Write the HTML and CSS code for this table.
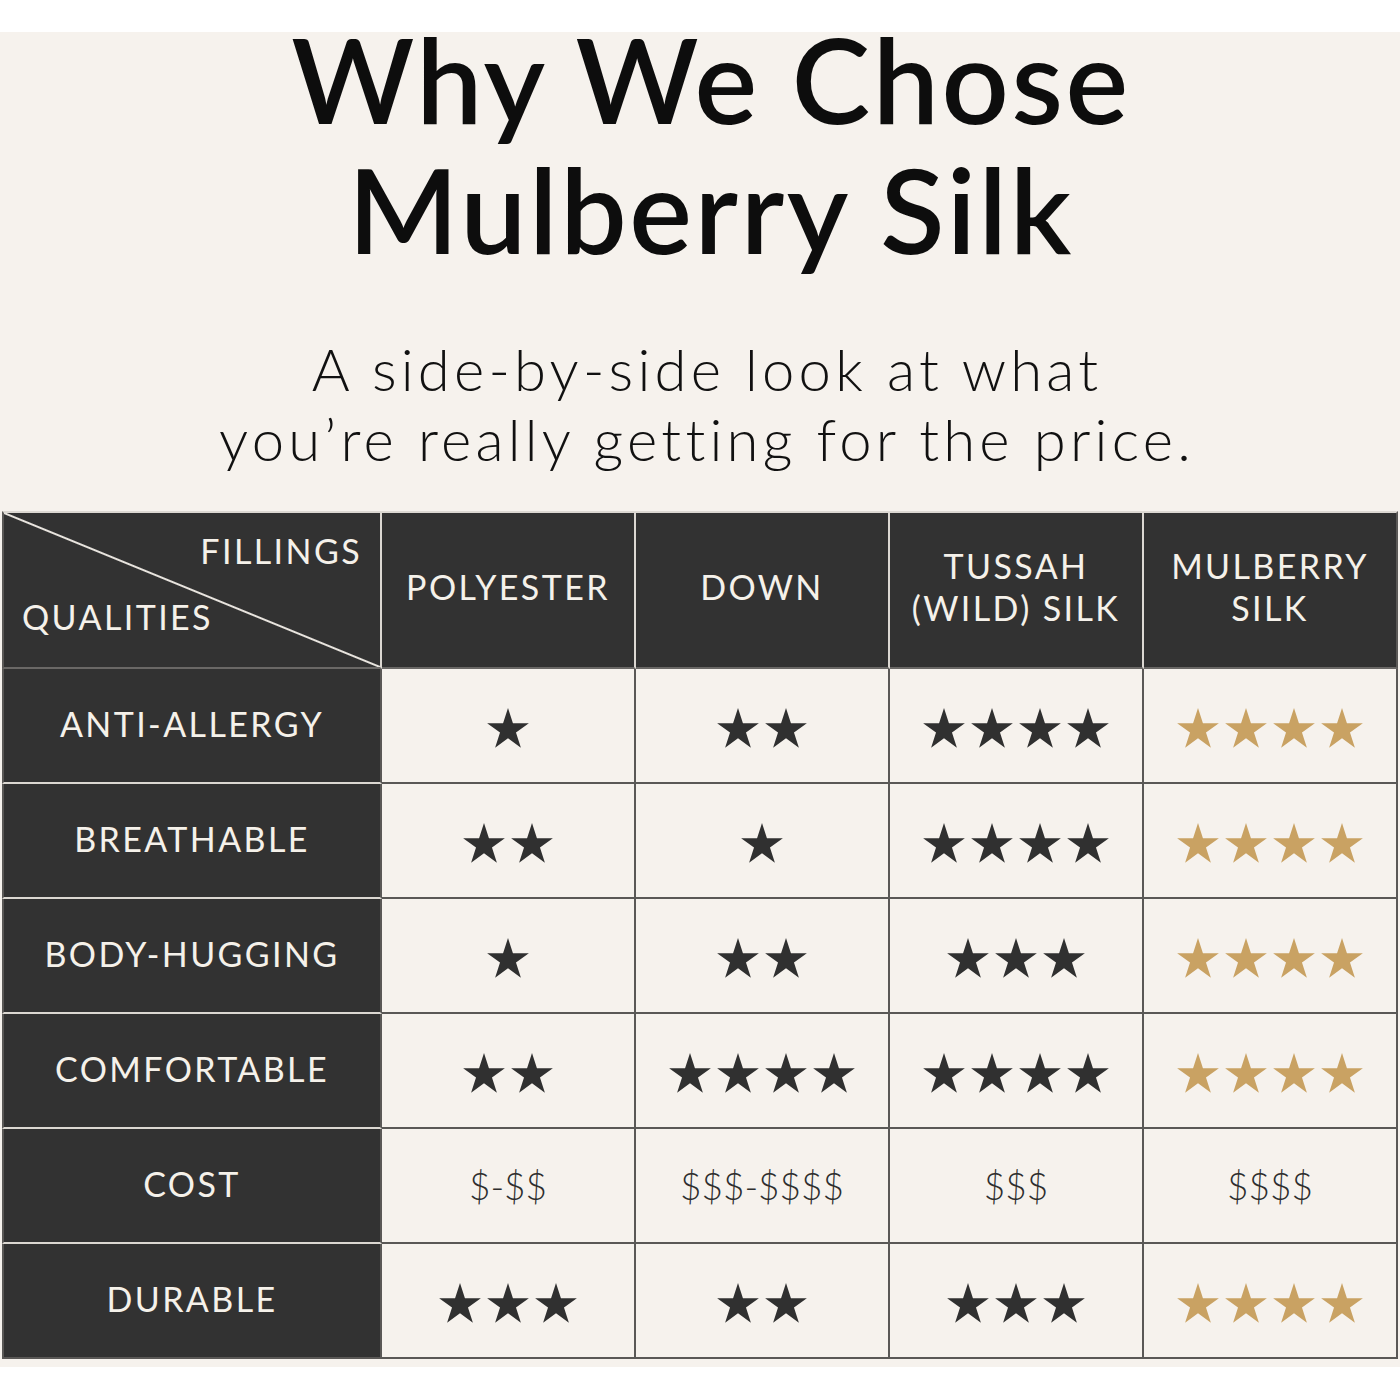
FILE: index.html
```html
<!DOCTYPE html>
<html lang="en">
<head>
<meta charset="utf-8">
<title>Why We Chose Mulberry Silk</title>
<link rel="stylesheet" href="styles.css">
</head>
<body>
<svg class="defs" width="0" height="0" aria-hidden="true">
  <defs>
    <symbol id="star" viewBox="0 0 46 43">
      <polygon points="23,0 28.17,15.88 44.87,15.89 31.37,25.72 36.52,41.61 23,31.8 9.48,41.61 14.63,25.72 1.13,15.89 17.83,15.88"/>
    </symbol>
  </defs>
</svg>
<div class="topband"></div>
<main class="page">
  <h1 class="title"><span class="title-line">Why We Chose</span><span class="title-line">Mulberry Silk</span></h1>
  <p class="subtitle"><span class="sub-line">A side-by-side look at what</span><span class="sub-line">you’re really getting for the price.</span></p>

  <div class="grid">
    <div class="cell head corner">
      <div class="corner-top">FILLINGS</div>
      <div class="corner-bottom">QUALITIES</div>
    </div>
    <div class="cell head">POLYESTER</div>
    <div class="cell head">DOWN</div>
    <div class="cell head">TUSSAH<br>(WILD) SILK</div>
    <div class="cell head last-col">MULBERRY<br>SILK</div>

    <div class="cell label">ANTI-ALLERGY</div>
    <div class="cell val"><span class="stars"><svg><use href="#star"/></svg></span></div>
    <div class="cell val"><span class="stars"><svg><use href="#star"/></svg><svg><use href="#star"/></svg></span></div>
    <div class="cell val"><span class="stars"><svg><use href="#star"/></svg><svg><use href="#star"/></svg><svg><use href="#star"/></svg><svg><use href="#star"/></svg></span></div>
    <div class="cell val last-col"><span class="stars gold"><svg><use href="#star"/></svg><svg><use href="#star"/></svg><svg><use href="#star"/></svg><svg><use href="#star"/></svg></span></div>

    <div class="cell label">BREATHABLE</div>
    <div class="cell val"><span class="stars"><svg><use href="#star"/></svg><svg><use href="#star"/></svg></span></div>
    <div class="cell val"><span class="stars"><svg><use href="#star"/></svg></span></div>
    <div class="cell val"><span class="stars"><svg><use href="#star"/></svg><svg><use href="#star"/></svg><svg><use href="#star"/></svg><svg><use href="#star"/></svg></span></div>
    <div class="cell val last-col"><span class="stars gold"><svg><use href="#star"/></svg><svg><use href="#star"/></svg><svg><use href="#star"/></svg><svg><use href="#star"/></svg></span></div>

    <div class="cell label">BODY-HUGGING</div>
    <div class="cell val"><span class="stars"><svg><use href="#star"/></svg></span></div>
    <div class="cell val"><span class="stars"><svg><use href="#star"/></svg><svg><use href="#star"/></svg></span></div>
    <div class="cell val"><span class="stars"><svg><use href="#star"/></svg><svg><use href="#star"/></svg><svg><use href="#star"/></svg></span></div>
    <div class="cell val last-col"><span class="stars gold"><svg><use href="#star"/></svg><svg><use href="#star"/></svg><svg><use href="#star"/></svg><svg><use href="#star"/></svg></span></div>

    <div class="cell label">COMFORTABLE</div>
    <div class="cell val"><span class="stars"><svg><use href="#star"/></svg><svg><use href="#star"/></svg></span></div>
    <div class="cell val"><span class="stars"><svg><use href="#star"/></svg><svg><use href="#star"/></svg><svg><use href="#star"/></svg><svg><use href="#star"/></svg></span></div>
    <div class="cell val"><span class="stars"><svg><use href="#star"/></svg><svg><use href="#star"/></svg><svg><use href="#star"/></svg><svg><use href="#star"/></svg></span></div>
    <div class="cell val last-col"><span class="stars gold"><svg><use href="#star"/></svg><svg><use href="#star"/></svg><svg><use href="#star"/></svg><svg><use href="#star"/></svg></span></div>

    <div class="cell label">COST</div>
    <div class="cell val cost">$-$$</div>
    <div class="cell val cost">$$$-$$$$</div>
    <div class="cell val cost">$$$</div>
    <div class="cell val cost last-col">$$$$</div>

    <div class="cell label last-row">DURABLE</div>
    <div class="cell val last-row"><span class="stars"><svg><use href="#star"/></svg><svg><use href="#star"/></svg><svg><use href="#star"/></svg></span></div>
    <div class="cell val last-row"><span class="stars"><svg><use href="#star"/></svg><svg><use href="#star"/></svg></span></div>
    <div class="cell val last-row"><span class="stars"><svg><use href="#star"/></svg><svg><use href="#star"/></svg><svg><use href="#star"/></svg></span></div>
    <div class="cell val last-row last-col"><span class="stars gold"><svg><use href="#star"/></svg><svg><use href="#star"/></svg><svg><use href="#star"/></svg><svg><use href="#star"/></svg></span></div>
  </div>
</main>
</body>
</html>
```

FILE: styles.css
```css
* { box-sizing: border-box; }

html, body {
  margin: 0;
  padding: 0;
  background: #ffffff;
}

body {
  font-family: "Lato", "Open Sans", sans-serif;
  color: #111;
}

.defs {
  display: block;
  width: 0;
  height: 0;
  overflow: hidden;
}

.topband {
  height: 32px;
  background: #ffffff;
}

.page {
  display: flex;
  flex-direction: column;
  background: #f6f2ed;
  padding-bottom: 8px;
}

.title {
  margin: -8px 0 0;
  padding-left: 22px;
  display: flex;
  flex-direction: column;
  align-items: center;
  gap: 20px;
  font-family: "Lato", sans-serif;
  font-weight: 600;
  font-size: 118px;
  line-height: 110px;
  color: #0d0d0d;
  letter-spacing: 2.6px;
}

.title-line {
  display: block;
}

.subtitle {
  margin: 70px 0 0;
  padding-left: 14px;
  display: flex;
  flex-direction: column;
  align-items: center;
  font-family: "Lato", sans-serif;
  font-weight: 300;
  font-size: 58px;
  line-height: 70px;
  color: #111;
  letter-spacing: 4.2px;
}

.sub-line {
  display: block;
}

.grid {
  margin: 37px 2px 0;
  display: grid;
  grid-template-columns: 380px repeat(4, 254px);
  grid-template-rows: 158px repeat(6, 115px);
}

.cell {
  display: flex;
  align-items: center;
  justify-content: center;
  text-align: center;
  border-right: 2px solid #5a5856;
  border-bottom: 2px solid #5a5856;
}

.head {
  background: #323232;
  color: #f5f1ea;
  font-size: 34px;
  letter-spacing: 2.4px;
  line-height: 42px;
  padding-bottom: 6px;
  border-right-color: #dcd8d2;
  border-bottom-color: #6a6866;
  border-top: 2px solid #dcd8d2;
}

.corner {
  display: block;
  text-align: left;
  padding: 18px 18px 0 18px;
  border-left: 2px solid #5a5856;
  line-height: 40px;
  background:
    linear-gradient(to top right, transparent calc(50% - 1.5px), #e8e4de calc(50% - 0.5px), #e8e4de calc(50% + 0.5px), transparent calc(50% + 1.5px)),
    #323232;
}

.corner-top {
  text-align: right;
}

.corner-bottom {
  margin-top: 26px;
}

.label {
  background: #323232;
  color: #f5f1ea;
  font-size: 34px;
  letter-spacing: 2.4px;
  padding-bottom: 4px;
  border-left: 2px solid #5a5856;
  border-right-color: #5a5856;
  border-bottom-color: #dcd8d2;
}

.label.last-row {
  border-bottom-color: #5a5856;
}

.val {
  background: #f6f2ed;
  padding-top: 6px;
}

.last-col {
  border-right-color: #5a5856;
}

.stars {
  display: flex;
  gap: 4px;
  color: #303030;
}

.stars svg {
  width: 44px;
  height: 41px;
  fill: currentColor;
}

.stars.gold {
  color: #c9a263;
}

.cost {
  font-weight: 300;
  font-size: 37px;
  color: #2e2e2e;
  padding-top: 0;
  -webkit-font-smoothing: antialiased;
}
```
